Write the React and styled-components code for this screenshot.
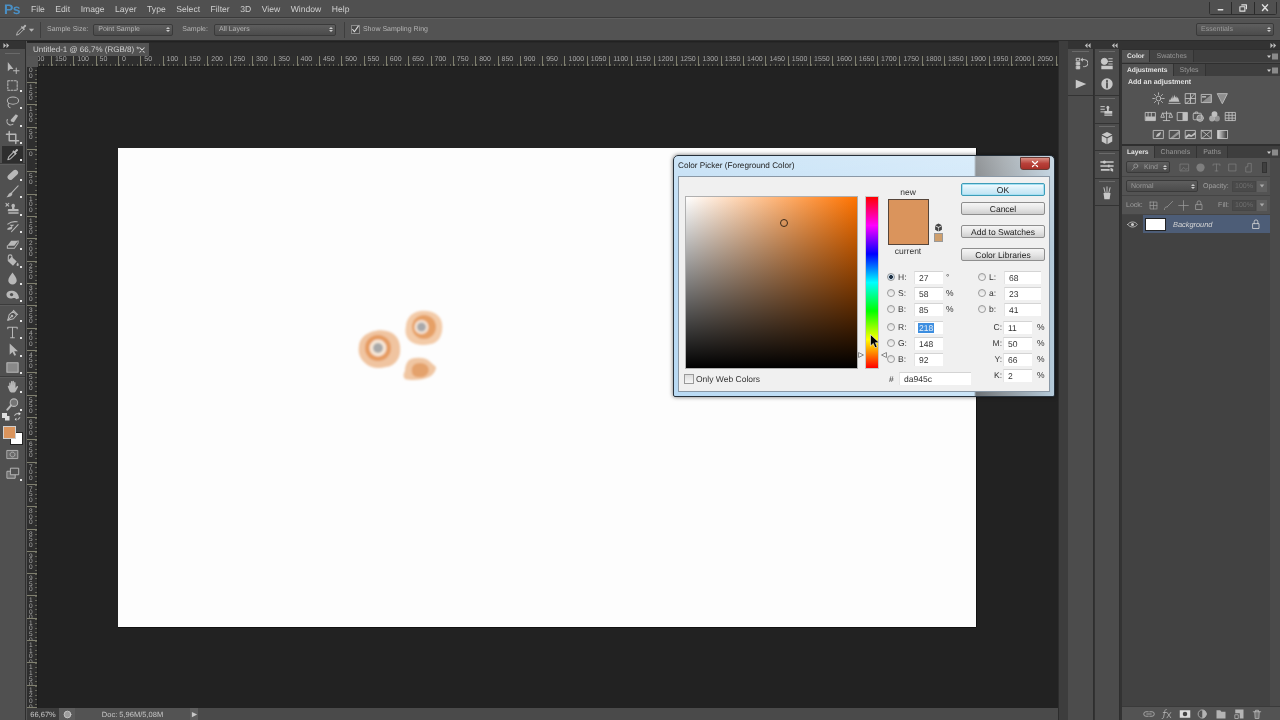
import React from 'react';
import styled, { createGlobalStyle } from 'styled-components';

const Global = createGlobalStyle`
  html, body { margin: 0; padding: 0; background: #535353; overflow: hidden; }
  * { box-sizing: border-box; }
`;

const UI = `"Liberation Sans", Arial, sans-serif`;
const TICK = 22.34;

const App_ = styled.div`
  position: relative; width: 1280px; height: 720px; overflow: hidden;
  display: flex; flex-direction: column; background: #535353;
  font-family: ${UI}; color: #c8c8c8; font-size: 8.5px; text-rendering: geometricPrecision;
  filter: blur(.3px);
`;
const MenuBar = styled.div`
  height: 18px; display: flex; align-items: center; padding-left: 4px; background: #505050;
  border-bottom: 1px solid #3a3a3a; flex: none;
`;
const Logo = styled.span`
  width: 27px; font: bold 14px ${UI}; color: #4a8fc4; letter-spacing: -0.5px;
`;
const MenuItem = styled.span`
  font-size: 8.6px; color: #cfcfcf; margin-right: 10.5px;
`;
const WinCtl = styled.div`
  margin: -1px 3px 0 auto; height: 13px; width: 68px; display: flex; background: #3f3f3f;
  border: 1px solid #2f2f2f; border-top: 0; border-radius: 0 0 3px 3px;
`;
const WinBtn = styled.span`
  flex: 1; display: flex; align-items: center; justify-content: center; color: #e0e0e0;
  border-left: 1px solid #2a2a2a; background: #505050;
  &:first-child { border-left: 0; }
`;
const OptionsBar = styled.div`
  height: 23px; flex: none; display: flex; align-items: center; background: #535353;
  border-top: 1px solid #5f5f5f; border-bottom: 1px solid #2c2c2c; padding-left: 14px; color: #b4b4b4;
`;
const Sep = styled.span`
  width: 1px; height: 16px; background: #3e3e3e; margin: ${p => p.$m}; flex: none;
`;
const Select = styled.div`
  width: ${p => p.$w}px; height: ${p => p.$h || 12}px; margin: ${p => p.$m || 0}; flex: none;
  display: flex; align-items: center; justify-content: space-between; padding: 0 2px 0 4px;
  background: linear-gradient(#5e5e5e, #4b4b4b); border: 1px solid #3a3a3a; border-radius: 2px;
  color: ${p => p.$dim ? '#9a9a9a' : '#b4b4b4'}; font-size: 7px;
`;
const Updown = styled.span`
  display: flex; flex-direction: column; gap: 1px;
  &::before, &::after { content: ''; border: 2px solid transparent; }
  &::before { border-bottom-color: #ccc; border-top-width: 0; }
  &::after { border-top-color: #ccc; border-bottom-width: 0; }
`;
const OptLabel = styled.span`
  font-size: 7px; margin: ${p => p.$m || 0}; flex: none; white-space: nowrap;
`;
const CheckBox = styled.span`
  width: 9px; height: 9px; background: #4a4a4a; border: 1px solid #8a8a8a; margin-left: 6px; flex: none;
  display: flex; align-items: center; justify-content: center; color: #ddd;
`;
const Main = styled.div`
  flex: 1; display: flex; min-height: 0;
`;
const ToolPanel = styled.div`
  width: 26px; flex: none; display: flex; flex-direction: column; background: #505050;
  border-right: 1px solid #2e2e2e; align-items: stretch;
`;
const DarkHead = styled.div`
  height: 8px; flex: none; background: #333; display: flex; align-items: center; color: #bbb; padding: 0 3px;
`;
const HeadCell = styled.div`
  width: ${p => p.$w ? `${p.$w}px` : 'auto'}; flex: ${p => p.$w ? 'none' : 1}; display: flex; justify-content: flex-end;
`;
const Grip = styled.div`
  height: 1px; margin: ${p => p.$m || '4px 5px 5px'}; background: #6a6a6a; flex: none;
`;
const ToolList = styled.div`
  display: flex; flex-direction: column; flex: none;
`;
const Tool = styled.div`
  position: relative; height: ${p => p.$h || 17.4}px; display: flex; align-items: center; justify-content: center;
  color: #b8b8b8; margin: 0 2px; flex: none;
  background: ${p => p.$on ? '#2e2e2e' : 'transparent'};
  ${p => p.$fly && `&::after { content: ''; position: absolute; right: 1px; bottom: 2px; width: 2px; height: 2px; background: #e4e4e4; }`}
`;
const ToolSep = styled.div`
  height: 2px; flex: none; border-top: 1px solid #3b3b3b; border-bottom: 1px solid #5c5c5c;
`;
const Mini = styled.div`
  height: 8px; display: flex; justify-content: space-between; align-items: center; padding: 0 3px 0 2px; flex: none; color: #ddd;
`;
const ColorWell = styled.div`
  position: relative; height: 20px; margin: 5px 0 0 3px; flex: none;
`;
const Bg = styled.span`
  position: absolute; left: 7px; top: 6px; width: 13px; height: 13px; background: #fff; border: 1px solid #222;
`;
const Fg = styled.span`
  position: absolute; left: 0; top: 0; width: 13px; height: 13px; background: #da945c; border: 1px solid #cfcfcf;
`;
const DocColumn = styled.div`
  width: 1031px; flex: none; margin-left: 1px; display: flex; flex-direction: column; background: #222;
`;
const TabBar = styled.div`
  height: 14px; flex: none; margin-top: 1px; display: flex; background: #2d2d2d; border-top: 1px solid #282828;
`;
const DocTab = styled.div`
  width: 122px; display: flex; align-items: center; justify-content: space-between; padding: 0 4px 0 6px;
  background: #535353; color: #d0d0d0; font-size: 8px; white-space: nowrap;
`;
const RulerRow = styled.div`
  height: 11px; flex: none; display: flex; background: #2e2e2e;
`;
const Corner = styled.div`
  width: 11px; flex: none; background: #555;
`;
const HTrack = styled.div`
  flex: 1; overflow: hidden; display: flex; border-bottom: 1px solid #1c1c1c;
`;
const HInner = styled.div`
  display: flex; margin-left: -9.4px; flex: none;
`;
const HCell = styled.span`
  width: ${TICK}px; height: 10px; flex: none; padding-left: 3px; border-left: 1px solid #80806f;
  font-size: 7px; line-height: 8px; color: #a8a8a8; white-space: nowrap;
  background: repeating-linear-gradient(to right, #66665a 0 1px, transparent 1px 4.468px) left bottom / 100% 2px no-repeat;
`;
const CanvasRow = styled.div`
  flex: 1; display: flex; min-height: 0;
`;
const VTrack = styled.div`
  width: 11px; flex: none; overflow: hidden; background: #2e2e2e; border-right: 1px solid #1c1c1c;
`;
const VInner = styled.div`
  display: flex; flex-direction: column; margin-top: -7.4px;
`;
const VCell = styled.div`
  height: ${TICK}px; flex: none; border-top: 1px solid #80806f; padding: 2px 0 0 2px; overflow: hidden;
  background: repeating-linear-gradient(to bottom, #66665a 0 1px, transparent 1px 4.468px) right top / 2px 100% no-repeat;
`;
const VText = styled.div`
  width: 5px; word-break: break-all; font-size: 6.5px; line-height: 5.6px; color: #a8a8a8;
`;
const Canvas = styled.div`
  flex: 1; min-width: 0; padding: 81px 0 0 80px; background: #222;
`;
const Doc = styled.div`
  width: 858px; height: 479px; background: #fdfdfd; box-shadow: 0 1px 0 #111, 1px 0 0 #111;
`;
const DocArt = styled.svg`
  display: block; width: 100%; height: 100%;
`;
const StatusBar = styled.div`
  height: 12px; flex: none; display: flex; align-items: center; background: #4a4a4a; color: #c8c8c8; font-size: 7.5px;
`;
const StatusCell = styled.div`
  height: 100%; width: ${p => p.$w}px; flex: none; display: flex; align-items: center; justify-content: center;
  background: ${p => p.$bg}; white-space: nowrap;
`;
const DockGutter = styled.div`
  width: 10px; flex: none; background: #3d3d3d; border-left: 1px solid #2c2c2c;
`;
const DockArea = styled.div`
  flex: 1; display: flex; flex-direction: column; min-width: 0;
`;
const DockRow = styled.div`
  flex: 1; display: flex; min-height: 0; background: #333; gap: 1px;
`;
const DockCol = styled.div`
  width: ${p => p.$w}px; flex: none; display: flex; flex-direction: column; background: #4c4c4c; border-right: 1px solid #2e2e2e;
`;
const DockGroup = styled.div`
  display: flex; flex-direction: column; align-items: stretch; flex: none; border-bottom: 1px solid #333; padding-bottom: ${p => p.$pb || 0}px;
`;
const DockIcon = styled.div`
  height: ${p => p.$h || 19}px; display: flex; align-items: center; justify-content: center; color: #c8c8c8;
`;
const Panels = styled.div`
  flex: 1; display: flex; flex-direction: column; min-width: 0; background: #4a4a4a; margin-left: 1px;
`;
const TabStrip = styled.div`
  height: 13px; flex: none; display: flex; align-items: stretch; background: #3e3e3e; border-top: 1px solid #2f2f2f; margin-top: ${p => p.$mt || 0}px;
`;
const PanelTab = styled.div`
  padding: 0 ${p => p.$pad || 5}px; display: flex; align-items: center; font-size: ${p => p.$on ? 6.7 : 7}px;
  background: ${p => p.$on ? '#535353' : '#444'}; color: ${p => p.$on ? '#e6e6e6' : '#989898'};
  font-weight: ${p => p.$on ? 'bold' : 'normal'}; border-right: 1px solid #333;
`;
const PanelMenu = styled.div`
  margin-left: auto; padding-right: 2px; display: flex; align-items: center; color: #cfcfcf;
`;
const AdjustBody = styled.div`
  height: 69px; flex: none; background: #535353; padding-top: 3px; border-bottom: 1px solid #2f2f2f;
`;
const AdjustTitle = styled.div`
  font-weight: bold; color: #e2e2e2; font-size: 7px; padding-left: 6px; height: 10px;
`;
const AdjustRow = styled.div`
  height: 18px; display: flex; justify-content: center; align-items: center; gap: 2px; padding-right: 22px; color: #c0c0c0;
`;
const IconCell = styled.span`
  width: 14px; height: 14px; display: flex; align-items: center; justify-content: center;
`;
const LayersBody = styled.div`
  flex: 1; display: flex; flex-direction: column; min-height: 0;
`;
const LayerControls = styled.div`
  background: #535353; flex: none; margin-right: 10px;
`;
const CtlRow = styled.div`
  height: 19px; display: flex; align-items: center; padding: 0 3px 0 4px; border-bottom: 1px solid #454545; color: #a0a0a0;
`;
const FilterIcons = styled.div`
  display: flex; gap: 2.200px; margin-left: 7px; color: #7e7e7e;
`;
const Toggle = styled.span`
  width: 6px; height: 11px; background: #3f3f3f; border: 1px solid #333; margin-left: 6px;
`;
const PctBox = styled.span`
  width: 24px; height: 11px; background: #4a4a4a; border: 1px solid #464646; color: #6e6e6e; font-size: 7px;
  display: flex; align-items: center; justify-content: center; flex: none;
`;
const PctArrow = styled.span`
  width: 10px; height: 11px; background: #606060; margin-left: 1px; flex: none; display: flex; align-items: center; justify-content: center; color: #aaa;
`;
const LockIcons = styled.div`
  display: flex; gap: 1px; margin: 0 auto 0 4px; color: #9a9a9a;
`;
const LayerList = styled.div`
  flex: 1; background: #424242; margin-right: 10px; min-height: 0;
`;
const LayerRow = styled.div`
  height: 18px; display: flex; align-items: center;
`;
const EyeCell = styled.div`
  width: 21px; height: 100%; flex: none; display: flex; align-items: center; justify-content: center; color: #ccc;
`;
const LayerMain = styled.div`
  flex: 1; height: 100%; display: flex; align-items: center; background: #4d5d77; padding: 0 8px 0 2px; color: #d6d6d6;
`;
const Thumb = styled.span`
  width: 21px; height: 13px; background: #fff; border: 1px solid #222; flex: none; margin-right: 7px;
`;
const LayerName = styled.span`
  font-style: italic; font-size: 7.4px; flex: 1;
`;
const PanelFooter = styled.div`
  height: 14px; flex: none; background: #535353; display: flex; align-items: center; padding-left: 20px; gap: 4px; color: #b4b4b4; border-top: 1px solid #3a3a3a;
`;

/* Colour picker dialog, floating over the workspace */
const Dialog = styled.div`
  position: absolute; left: 673px; top: 155px; width: 382px; height: 242px; display: flex; flex-direction: column;
  padding: 0 4px 4px 4px; border: 1px solid #26303a; border-radius: 5px 5px 2px 2px;
  background:
    linear-gradient(rgba(255,255,255,.28), rgba(255,255,255,0) 40%),
    linear-gradient(to right, #b9daf4 0, #cbe5f8 300px, #6d7276 302px, #8d959b 330px, #b5cbdb 100%);
  box-shadow: 0 0 4px rgba(0,0,0,.55);
  color: #222;
`;
const TitleBar = styled.div`
  height: 20px; flex: none; display: flex; align-items: flex-start; justify-content: space-between; color: #222;
`;
const TitleText = styled.span`
  margin: 5px 0 0 0; font-size: 8.2px;
`;
const CloseBtn = styled.span`
  width: 30px; height: 13px; margin-top: 1px; border-radius: 0 0 3px 3px; border: 1px solid #6a3a34;
  background: linear-gradient(#d98e82, #b9413a 50%, #a83029); color: #fff; display: flex; align-items: center; justify-content: center;
`;
const Client = styled.div`
  flex: 1; display: flex; background: #f0f0f0; border: 1px solid #8a98a6; padding-left: 7px; min-height: 0;
`;
const PickerCol = styled.div`
  width: 171px; flex: none; padding-top: 20px; display: flex; flex-direction: column;
`;
const SvSquare = styled.div`
  position: relative; width: 171px; height: 171px; flex: none;
  background: linear-gradient(to top, #000, rgba(0,0,0,0)), linear-gradient(to right, #fff, #ff7300);
  box-shadow: 0 0 0 1px #b0b0b0;
`;
const SvMark = styled.span`
  position: absolute; left: 94px; top: 22px; width: 8px; height: 8px; border-radius: 50%; border: 1px solid #3a2a1a;
`;
const WebRow = styled.div`
  display: flex; align-items: center; margin: 6px 0 0 -2px; gap: 2px; color: #333; font-size: 8.5px;
`;
const WebBox = styled.span`
  width: 10px; height: 10px; background: linear-gradient(#ddd, #f6f6f6); border: 1px solid #9a9a9a;
`;
const HueStrip = styled.div`
  position: relative; width: 12px; height: 171px; flex: none; margin: 20px 8px 0 9px;
  background: linear-gradient(#f00, #f0f 16.67%, #00f 33.33%, #0ff 50%, #0f0 66.67%, #ff0 83.33%, #f00);
  box-shadow: 0 0 0 1px #c8c8c8;
`;
const HueArrow = styled.span`
  position: absolute; top: 155px; ${p => p.$side}: -8px; width: 5px; height: 6px; color: #8a8a8a; display: flex;
`;
const Pointer = styled.svg`
  position: absolute; left: 4px; top: 137px; width: 10px; height: 15px;
`;
const RightSide = styled.div`
  flex: 1; display: flex; flex-direction: column; min-width: 0; color: #333;
`;
const RightTop = styled.div`
  height: 92px; flex: none; display: flex;
`;
const SwatchCol = styled.div`
  width: 75px; flex: none; position: relative; padding: 9px 0 0 2px;
`;
const SwatchLabel = styled.div`
  width: 40px; text-align: center; font-size: 8.5px; height: 13px; line-height: 12px;
`;
const Swatch = styled.div`
  width: 41px; height: 46px; background: #da945c; border: 1px solid #56453a;
`;
const CubeStack = styled.div`
  position: absolute; left: 48px; top: 46px; display: flex; flex-direction: column; align-items: center; gap: 1px; color: #444;
`;
const MiniSwatch = styled.span`
  width: 9px; height: 9px; background: #cf9f6c; border: 1px solid #999;
`;
const ButtonCol = styled.div`
  width: 84px; flex: none; display: flex; flex-direction: column; padding-top: 6px;
`;
const Btn = styled.div`
  height: 13px; flex: none; margin-bottom: ${p => p.$mb}px; display: flex; align-items: center; justify-content: center;
  font-size: 8.5px; color: #222; border-radius: 2px; border: 1px solid ${p => p.$primary ? '#3d9cb8' : '#8e8e8e'};
  background: ${p => p.$primary
    ? 'linear-gradient(#f4fbff, #d4edf8 50%, #bfe3f3)'
    : 'linear-gradient(#f5f5f5, #e6e6e6 50%, #cfcfcf)'};
  ${p => p.$primary && 'box-shadow: inset 0 0 0 1px #a6e0f2;'}
`;
const Fields = styled.div`
  display: flex; flex: 1;
`;
const FieldCol = styled.div`
  width: ${p => p.$w}px; flex: none; display: flex; flex-direction: column;
`;
const FieldRow = styled.div`
  height: 16px; flex: none; display: flex; align-items: center; margin-bottom: ${p => p.$mb || 0}px; font-size: 8.5px;
`;
const Radio = styled.span`
  width: 8px; height: 8px; border-radius: 50%; flex: none; border: 1px solid #9a9a9a; margin-left: ${p => p.$ml || 0}px;
  background: ${p => p.$on ? 'radial-gradient(circle, #234 0 1.700px, #cfe0ee 2.200px)' : 'linear-gradient(#ddd, #f8f8f8)'};
`;
const FLabel = styled.span`
  width: ${p => p.$w}px; flex: none; padding-left: ${p => p.$pl || 0}px; text-align: ${p => p.$right ? 'right' : 'left'};
`;
const Input = styled.span`
  width: ${p => p.$w}px; height: 13px; flex: none; background: #fff; border-top: 1px solid #d4d4d4; border-left: 1px solid #e4e4e4;
  padding-left: 4px; display: flex; align-items: center; font-size: 8.5px; color: #333;
`;
const Selected = styled.span`
  background: #3d8ee0; color: #e8f0f8; padding: 0 1px; margin-left: -1px;
`;
const Unit = styled.span`
  margin-left: ${p => p.$ml || 3}px; font-size: 8.5px;
`;
const HexRow = styled.div`
  height: 15px; display: flex; align-items: center; margin-top: 4px; margin-left: 3px; font-size: 8.5px;
`;

/* Icons */
const Svg = styled.svg`
  display: block; flex: none; width: ${p => p.$s || 14}px; height: ${p => p.$s || 14}px;
`;
const Ic = ({ s, children, vb = 16, w = 1.1 }) => (
  <Svg $s={s} viewBox={`0 0 ${vb} ${vb}`} fill="none" stroke="currentColor" strokeWidth={w} strokeLinecap="round" strokeLinejoin="round">{children}</Svg>
);
const F = { fill: 'currentColor', stroke: 'none' };

const eyedropper = <><path d="M3 13.5l1-3 5.5-5.5 2 2L6 12.5z" /><path {...F} d="M9 3.5l1.2 1 1.800-2.200c1-.8 2.500.6 1.700 1.700l-2.200 1.800 1 1.200-1.200 1.200-3.500-3.500z" /></>;
const hand = <path {...F} d="M4.500 8V4.500c0-1 1.300-1 1.400 0L6.300 7V2.800c0-1 1.400-1 1.500 0L8 7V2.500c0-1 1.400-1 1.500 0V7.300l.3-3.500c.1-1 1.400-.8 1.400.2V9.500l1.300-1.700c.7-.8 1.800 0 1.300.9L11.500 13c-.6 1-1.300 1.500-2.500 1.500H7.500c-1.500 0-2.300-.8-2.800-2L3 8.300c-.3-1 .9-1.500 1.500-.3z" />;

const tools = [
  [
    { k: 'move', i: <><path {...F} d="M3 2v10l2.500-2.300L9 9.500z" /><path d="M12 8.500v6M9 11.500h6" /></> },
    { k: 'marquee', fly: 1, i: <rect x="3" y="3" width="10" height="10" strokeDasharray="2 1.500" /> },
    { k: 'lasso', fly: 1, i: <><ellipse cx="8.500" cy="6" rx="6" ry="3.800" /><path d="M4 9c-1.500 1.500-.5 4 1.500 4.500" /></> },
    { k: 'quick', fly: 1, i: <><path d="M2.500 8a4 4 0 0 0 6 5" strokeDasharray="2 1" /><path {...F} d="M6 8.500l5.500-6 2.500 1.500-4.500 7-3-1z" /></> },
    { k: 'crop', fly: 1, w: 1.5, i: <path d="M4.500 1.500v10h10M1.500 4.500h10v10" /> },
    { k: 'eye', fly: 1, on: 1, i: eyedropper },
  ],
  [
    { k: 'heal', fly: 1, i: <rect x="1.500" y="5.500" width="13" height="6" rx="3" transform="rotate(-42 8 8)" {...F} /> },
    { k: 'brush', fly: 1, i: <><path d="M14 2L6.500 10" /><path {...F} d="M6.500 9l1.500 1.500c-.5 2.500-3 3.800-6.500 3.500 1.800-.8 1.500-3.800 5-5z" /></> },
    { k: 'stamp', fly: 1, i: <><path {...F} d="M8.500 3a2 2 0 0 1 1.500 3.500V8.500h3.500c.8 0 1 .5 1 1V11H3V9.500c0-.6.400-1 1-1h3.500V6.500A2 2 0 0 1 8.500 3zM3.500 12h11v1.500h-11z" /><path d="M1 2.500l3 3M4 2.500l-3 3" /></> },
    { k: 'hist', fly: 1, i: <><path d="M3 5.500c3-2.500 7-3 10-2.500M7 13.500L14 6" /><path {...F} d="M2 11c2-2 4-3 6-2l-1 2c-1.500.5-3 1-5 0z" /><path {...F} d="M5 6h5l-3 2.500z" /></> },
    { k: 'eraser', fly: 1, i: <><path {...F} d="M6.500 5h7.500l-4 5.500H2.500z" /><path d="M2.500 10.500v2.500h7.500l4-5.500V5" /></> },
    { k: 'fill', fly: 1, i: <><path {...F} d="M7 4l5.500 5-4 4.500-5.500-5zM13.500 10c.8 1 1.200 2 1.200 2.700a1.200 1.200 0 0 1-2.400 0c0-.7.500-1.700 1.200-2.700z" /><path d="M3.500 8V4a2 2 0 0 1 4 0v2" /></> },
    { k: 'drop', fly: 1, i: <path {...F} d="M8 1.500c2 3 4.500 5.500 4.500 8.500a4.500 4.500 0 0 1-9 0c0-3 2.500-5.500 4.500-8.500z" /> },
    { k: 'smudge', fly: 1, i: <><path {...F} d="M1.500 7c0-3 3-4.500 6.500-4 4 .5 6.500 3.500 7 8l-3 1c-1-1.500-2-1.500-4-1-3 .8-6.500-.5-6.500-4z" /><circle cx="7" cy="7" r="1.800" fill="#505050" stroke="none" /></> },
  ],
  [
    { k: 'pen', fly: 1, i: <><path d="M3 13l1.500-6 4-3.500 4 4-3.500 4z" /><path d="M3 13l3.500-3.500M9 2.500l4.500 4.500" /><circle cx="7.500" cy="8.500" r=".8" /></> },
    { k: 'type', fly: 1, i: <path d="M3 4V2.500h10V4M8 2.500v11M6 13.500h4" /> },
    { k: 'path', fly: 1, i: <path {...F} d="M5 1.500v12l3-2.800 2 4 1.800-.8-2-4h4z" /> },
    { k: 'shape', fly: 1, i: <rect x="2" y="3" width="12" height="10" fill="currentColor" fillOpacity=".55" /> },
  ],
  [
    { k: 'hand', fly: 1, i: hand },
    { k: 'zoom', fly: 1, i: <><circle cx="9.500" cy="6" r="4" fill="currentColor" fillOpacity=".35" /><path strokeWidth="2.200" d="M6.500 9l-4 4.500" /></> },
  ],
];

const db = (
  <Ic s={7} vb={8}><path {...F} d="M4 1v6L1 4zM7.500 1v6l-3-3z" /></Ic>
);
const df = (
  <Ic s={7} vb={8}><path {...F} d="M4 1v6l3-3zM.5 1v6l3-3z" /></Ic>
);
const menuIc = (
  <Svg $s={11} viewBox="0 0 11 8" fill="currentColor"><path d="M0 3h4L2 5.500z" /><rect x="5" y="1" width="6" height="6" fill="#8a8a8a" /></Svg>
);

const adj = {
  sun: <Ic s={13}><circle cx="8" cy="8" r="3" /><path d="M8 1v2M8 13v2M1 8h2M13 8h2M3 3l1.500 1.500M13 3l-1.500 1.500M3 13l1.500-1.500M13 13l-1.500-1.500" /></Ic>,
  levels: <Ic s={13}><path {...F} d="M1 12l1-3 1 1 1-4 1 3 1-5 1 4 1-5 1 4 1-2 1 3 1-2 1 3 1 3z" /><path d="M1 14h14" /></Ic>,
  curves: <Ic s={13}><rect x="2" y="2" width="12" height="12" /><path d="M2 14C7 13 9 4 14 2M2 8h12M8 2v12" /></Ic>,
  expo: <Ic s={13}><rect x="2" y="3" width="12" height="10" /><path {...F} d="M2 13L14 3v10z" opacity=".55" /><path stroke="#fff" d="M3 6h4" /></Ic>,
  vibrance: <Ic s={13}><path {...F} d="M2 2h12L8 14z" opacity=".55" /><path d="M2 2h12L8 14z" /></Ic>,
  hue: <Ic s={13}><rect x="2" y="3" width="12" height="10" /><path {...F} d="M2 8h12v5H2z" /><path d="M5 3v5M9 3v5" /></Ic>,
  balance: <Ic s={13}><path d="M8 2v11M4 13h8M3 4h10M3 4L1 9h4zM13 4l-2 5h4z" /></Ic>,
  bw: <Ic s={13}><rect x="2" y="3" width="12" height="10" /><path {...F} d="M8 3h6v10H8z" /></Ic>,
  photo: <Ic s={13}><rect x="1.500" y="4" width="10" height="8" rx="1" /><circle cx="10" cy="10" r="4" fill="currentColor" fillOpacity=".5" /><path d="M4 4V2.500h3V4" /></Ic>,
  mixer: <Svg $s={13} viewBox="0 0 16 16" fill="currentColor"><circle cx="8" cy="5" r="3.600" /><circle cx="5" cy="10.500" r="3.600" opacity=".8" /><circle cx="11" cy="10.500" r="3.600" opacity=".6" /></Svg>,
  lookup: <Ic s={13}><rect x="2" y="3" width="12" height="10" /><path d="M6 3v10M10 3v10M2 6.500h12M2 10h12" /></Ic>,
  invert: <Ic s={13}><rect x="2" y="3" width="12" height="10" /><path {...F} d="M5 11c0-3 3-5 6-6 0 3-2 6-6 6z" /></Ic>,
  post: <Ic s={13}><rect x="2" y="3" width="12" height="10" /><path {...F} opacity=".6" d="M2 13L14 3v4L6 13z" /></Ic>,
  thresh: <Ic s={13}><rect x="2" y="3" width="12" height="10" /><path {...F} d="M2 10l4-3 3 2 5-4v3l-5 3-3-1-4 3z" /></Ic>,
  selcol: <Ic s={13}><rect x="2" y="3" width="12" height="10" /><path d="M2 3l12 10M14 3L2 13" /></Ic>,
  grad: <Svg $s={13} viewBox="0 0 16 16"><defs><linearGradient id="adjg"><stop offset="0" stopColor="#ddd" /><stop offset="1" stopColor="#333" /></linearGradient></defs><rect x="2" y="3" width="12" height="10" fill="url(#adjg)" stroke="#ccc" /></Svg>,
};
const adjRows = [
  ['sun', 'levels', 'curves', 'expo', 'vibrance'],
  ['hue', 'balance', 'bw', 'photo', 'mixer', 'lookup'],
  ['invert', 'post', 'thresh', 'selcol', 'grad'],
];

const lockIc = <Ic s={12}><rect x="4" y="7.500" width="8" height="6.500" /><path d="M5.500 7.500V5a2.500 2.500 0 0 1 5 0v2.500" /></Ic>;

const hLabels = [];
for (let v = -200; v <= 2100; v += 50) hLabels.push(Math.abs(v));
const vLabels = [];
for (let v = -200; v <= 1250; v += 50) vLabels.push(Math.abs(v));

const hsb = [['H:', '27', '°', 1], ['S:', '58', '%'], ['B:', '85', '%']];
const rgb = [['R:', '218'], ['G:', '148'], ['B:', '92']];
const lab = [['L:', '68'], ['a:', '23'], ['b:', '41']];
const cmyk = [['C:', '11'], ['M:', '50'], ['Y:', '66'], ['K:', '2']];

export default function App() {
  return (
    <App_>
      <Global />
      <MenuBar>
        <Logo>Ps</Logo>
        {['File', 'Edit', 'Image', 'Layer', 'Type', 'Select', 'Filter', '3D', 'View', 'Window', 'Help'].map(m => <MenuItem key={m}>{m}</MenuItem>)}
        <WinCtl>
          <WinBtn><Ic s={9}><path strokeWidth="2.500" d="M4 12h8" /></Ic></WinBtn>
          <WinBtn><Ic s={10}><rect x="3" y="6" width="8" height="7" strokeWidth="1.800" /><path strokeWidth="1.800" d="M6 3h7.500v6" /></Ic></WinBtn>
          <WinBtn><Ic s={10} w={2.400}><path d="M4 3l8 9M12 3l-8 9" /></Ic></WinBtn>
        </WinCtl>
      </MenuBar>
      <OptionsBar>
        <Ic s={14}>{eyedropper}</Ic>
        <Ic s={7} vb={8}><path {...F} d="M1 3h6L4 6.500z" /></Ic>
        <Sep $m="0 6px 0 5px" />
        <OptLabel>Sample Size:</OptLabel>
        <Select $w={80} $m="0 0 0 5px">Point Sample<Updown /></Select>
        <OptLabel $m="0 0 0 9px">Sample:</OptLabel>
        <Select $w={122} $m="0 0 0 6px">All Layers<Updown /></Select>
        <Sep $m="0 0 0 8px" />
        <CheckBox><Ic s={9} w={2}><path d="M3 8l3 4 7-10" /></Ic></CheckBox>
        <OptLabel $m="0 0 0 3px">Show Sampling Ring</OptLabel>
        <Select $w={78} $h={13} $dim $m="0 6px 0 auto">Essentials<Updown /></Select>
      </OptionsBar>
      <Main>
        <ToolPanel>
          <DarkHead>{df}</DarkHead>
          <Grip />
          {tools.map((group, g) => (
            <React.Fragment key={g}>
              <ToolList>
                {group.map(t => (
                  <Tool key={t.k} $fly={t.fly} $on={t.on}>
                    <Ic s={15} w={t.w || 1.1}>{t.i}</Ic>
                  </Tool>
                ))}
              </ToolList>
              {g < tools.length - 1 && <ToolSep />}
            </React.Fragment>
          ))}
          <Mini>
            <Ic s={8} vb={8}><rect {...F} x="0" y="0" width="5" height="5" /><rect x="3" y="3" width="4.500" height="4.500" fill="#ddd" stroke="none" /></Ic>
            <Ic s={9} w={1.600}><path d="M3 6a4 4 0 0 1 4-3h3M12 10a4 4 0 0 1-3 3" /><path {...F} d="M10 0l4 3-4 3zM6 16l-3-3 3-3z" /></Ic>
          </Mini>
          <ColorWell><Bg /><Fg /></ColorWell>
          <Tool $h={18}><Ic s={13}><rect x="1.500" y="3" width="13" height="10" fill="currentColor" fillOpacity=".25" /><circle cx="8" cy="8" r="3" strokeDasharray="1.500 1" /></Ic></Tool>
          <Tool $h={19} $fly><Ic s={14}><rect x="1.500" y="6" width="9" height="8" fill="currentColor" fillOpacity=".3" /><rect x="5.500" y="2.500" width="9" height="7.500" fill="#505050" /></Ic></Tool>
        </ToolPanel>
        <DocColumn>
          <TabBar>
            <DocTab>
              <span>Untitled-1 @ 66,7% (RGB/8) *</span>
              <Ic s={6} vb={8} w={1.400}><path d="M1 1l6 6M7 1L1 7" /></Ic>
            </DocTab>
          </TabBar>
          <RulerRow>
            <Corner />
            <HTrack>
              <HInner>{hLabels.map((l, i) => <HCell key={i}>{l}</HCell>)}</HInner>
            </HTrack>
          </RulerRow>
          <CanvasRow>
            <VTrack>
              <VInner>{vLabels.map((l, i) => <VCell key={i}><VText>{l}</VText></VCell>)}</VInner>
            </VTrack>
            <Canvas>
              <Doc>
                <DocArt viewBox="0 0 858 479">
                  <defs><filter id="soft"><feGaussianBlur stdDeviation=".8" /></filter></defs>
                  <g filter="url(#soft)">
                    <path fill="#f0c4a0" d="M246 188c7-6 19-8 28-3 7 4 9 12 8 20-1 7-6 13-14 14-8 2-16 1-21-4-6-5-7-12-6-17 0-4 2-7 5-10z" />
                    <circle cx="260" cy="200" r="13" fill="#e69c62" />
                    <circle cx="260" cy="200" r="8.500" fill="#f8e8d8" />
                    <circle cx="260" cy="200" r="5" fill="#a9a9a9" />
                    <path fill="#f3cba8" d="M293 167c6-5 17-6 25-1 6 4 7 11 6 17-1 7-5 12-11 13-8 2-16 1-21-3-5-5-5-10-4-15 0-4 2-8 5-11z" />
                    <circle cx="306" cy="179" r="12" fill="#e6a066" />
                    <circle cx="303.500" cy="179" r="7" fill="#f6e6d8" />
                    <circle cx="303.500" cy="179" r="4.500" fill="#a8a8aa" />
                    <path fill="#f0c6a2" d="M291 212c5-3 14-3 19 0l8 7c0 4-3 8-7 10-6 3-17 4-24 2-2-2-2-5 0-8 0-4 1-8 4-11z" />
                    <path fill="#e4a26c" d="M297 216c5-2 11-1 13 3 2 4 0 8-5 10-5 1-10 0-11-4-1-4 0-7 3-9z" />
                  </g>
                </DocArt>
              </Doc>
            </Canvas>
          </CanvasRow>
          <StatusBar>
            <StatusCell $w={32} $bg="#3c3c3c">66,67%</StatusCell>
            <StatusCell $w={16} $bg="#5c5c5c"><Ic s={9} w={1.600}><circle cx="8" cy="8" r="6" fill="currentColor" fillOpacity=".6" /></Ic></StatusCell>
            <StatusCell $w={115} $bg="#535353">Doc: 5,96M/5,08M</StatusCell>
            <StatusCell $w={8} $bg="#5e5e5e"><Ic s={7} vb={8}><path {...F} d="M1 1l6 3-6 3z" /></Ic></StatusCell>
          </StatusBar>
        </DocColumn>
        <DockGutter />
        <DockArea>
          <DarkHead>
            <HeadCell $w={20}>{db}</HeadCell>
            <HeadCell $w={27}>{db}</HeadCell>
            <HeadCell>{df}</HeadCell>
          </DarkHead>
          <DockRow>
            <DockCol $w={26}>
              <DockGroup $pb={1}>
                <Grip $m="2px 4px 2px" />
                <DockIcon $h={20}><Ic s={14}><rect x="3" y="1.500" width="3.500" height="3" /><rect x="3" y="6" width="3.500" height="3" fill="currentColor" /><rect x="3" y="10.500" width="3.500" height="3" fill="currentColor" /><path d="M10 3h2a2.500 2.500 0 0 1 0 8h-1" /><path {...F} d="M10 .5v5L7.500 3z" /></Ic></DockIcon>
                <DockIcon $h={20}><Ic s={14}><path {...F} d="M2 3l12 5-12 5z" /></Ic></DockIcon>
              </DockGroup>
            </DockCol>
            <DockCol $w={25}>
              <DockGroup $pb={1}>
                <Grip $m="2px 4px 2px" />
                <DockIcon $h={20}><Ic s={14}><circle cx="5" cy="5" r="3.500" fill="currentColor" /><path d="M10 2h4M10 5h4M10 8h4" /><rect {...F} x="1.500" y="10" width="13" height="4" /></Ic></DockIcon>
                <DockIcon $h={20}><Ic s={14}><circle {...F} cx="8" cy="8" r="6.500" /><path stroke="#4c4c4c" strokeWidth="2" d="M8 7v5M8 4v1" /></Ic></DockIcon>
              </DockGroup>
              <DockGroup $pb={2.5}>
                <Grip $m="2px 4px 2px" />
                <DockIcon><Ic s={14}><path d="M1 3h4M1 6h4M1 9h4" /><path {...F} d="M9 2a2 2 0 0 1 1 3.500V8h4v3H5V8h3V5.500A2 2 0 0 1 9 2zM5 12h9v1.500H5z" /></Ic></DockIcon>
              </DockGroup>
              <DockGroup $pb={2.5}>
                <Grip $m="2px 4px 2px" />
                <DockIcon><Ic s={14}><path {...F} d="M8 1l6 3-6 3-6-3zM2 5.500l5.500 2.800V15L2 12zM14 5.500L8.500 8.300V15l5.500-3z" /></Ic></DockIcon>
              </DockGroup>
              <DockGroup $pb={2.5}>
                <Grip $m="2px 4px 2px" />
                <DockIcon><Ic s={14} w={1.600}><path d="M1 3.500h14M1 8h14" /><circle {...F} cx="5" cy="3.500" r="1.800" /><rect {...F} x="9" y="6.500" width="2" height="3" /><path {...F} d="M1 11.500h10v2H1zM12 10l3 1.500v3l-3-1z" /></Ic></DockIcon>
              </DockGroup>
              <DockGroup $pb={2.5}>
                <Grip $m="2px 4px 2px" />
                <DockIcon><Ic s={14}><path {...F} d="M4 8h8l-1 7H5z" /><path d="M6 8L4.500 2M8 8V1M10 8l1.500-6" /></Ic></DockIcon>
              </DockGroup>
            </DockCol>
            <Panels>
              <TabStrip>
                <PanelTab $on>Color</PanelTab>
                <PanelTab $pad={6}>Swatches</PanelTab>
                <PanelMenu>{menuIc}</PanelMenu>
              </TabStrip>
              <TabStrip $mt={1}>
                <PanelTab $on>Adjustments</PanelTab>
                <PanelTab $pad={6}>Styles</PanelTab>
                <PanelMenu>{menuIc}</PanelMenu>
              </TabStrip>
              <AdjustBody>
                <AdjustTitle>Add an adjustment</AdjustTitle>
                {adjRows.map((r, i) => (
                  <AdjustRow key={i}>
                    {r.map(k => <IconCell key={k}>{adj[k]}</IconCell>)}
                  </AdjustRow>
                ))}
              </AdjustBody>
              <TabStrip>
                <PanelTab $on>Layers</PanelTab>
                <PanelTab $pad={6}>Channels</PanelTab>
                <PanelTab $pad={6}>Paths</PanelTab>
                <PanelMenu>{menuIc}</PanelMenu>
              </TabStrip>
              <LayersBody>
                <LayerControls>
                  <CtlRow>
                    <Select $w={44} $dim><Ic s={8} w={1.600}><circle cx="9.500" cy="6" r="4" /><path d="M6.500 9L2 14" /></Ic>Kind<Updown /></Select>
                    <FilterIcons>
                      <IconCell><Ic s={11}><rect x="2" y="3" width="12" height="10" /><path d="M3 12l4-4 3 3 2-2" /></Ic></IconCell>
                      <IconCell><Ic s={11}><circle {...F} cx="8" cy="8" r="6" /></Ic></IconCell>
                      <IconCell><Ic s={11}><path d="M3 5V3h10v2M8 3v10M6 13h4" /></Ic></IconCell>
                      <IconCell><Ic s={11}><rect x="3" y="3" width="10" height="10" /></Ic></IconCell>
                      <IconCell><Ic s={11}><path d="M4 14V7h3V2h5v12z" /></Ic></IconCell>
                    </FilterIcons>
                    <Toggle />
                  </CtlRow>
                  <CtlRow>
                    <Select $w={72} $dim>Normal<Updown /></Select>
                    <OptLabel $m="0 auto 0 5px">Opacity:</OptLabel>
                    <PctBox>100%</PctBox>
                    <PctArrow><Ic s={6} vb={8}><path {...F} d="M1 2h6L4 6z" /></Ic></PctArrow>
                  </CtlRow>
                  <CtlRow>
                    <OptLabel>Lock:</OptLabel>
                    <LockIcons>
                      <IconCell><Ic s={11}><rect x="3" y="3" width="10" height="10" strokeDasharray="2 1" /><path d="M3 8h10M8 3v10" /></Ic></IconCell>
                      <IconCell><Ic s={11}><path d="M14 2L6 10M2 14c0-3 2-4.500 4-4" /></Ic></IconCell>
                      <IconCell><Ic s={11}><path d="M8 1v14M1 8h14" /></Ic></IconCell>
                      <IconCell>{lockIc}</IconCell>
                    </LockIcons>
                    <OptLabel $m="0 3px 0 0">Fill:</OptLabel>
                    <PctBox>100%</PctBox>
                    <PctArrow><Ic s={6} vb={8}><path {...F} d="M1 2h6L4 6z" /></Ic></PctArrow>
                  </CtlRow>
                </LayerControls>
                <LayerList>
                  <LayerRow>
                    <EyeCell><Ic s={11}><path d="M1 8c3-5 11-5 14 0-3 5-11 5-14 0z" /><circle {...F} cx="8" cy="8" r="2.200" /></Ic></EyeCell>
                    <LayerMain>
                      <Thumb />
                      <LayerName>Background</LayerName>
                      {lockIc}
                    </LayerMain>
                  </LayerRow>
                </LayerList>
                <PanelFooter>
                  <IconCell><Ic s={12}><path d="M7 5H4a3 3 0 0 0 0 6h3M9 5h3a3 3 0 0 1 0 6H9M5 8h6" /></Ic></IconCell>
                  <IconCell><Ic s={12}><path d="M7 2C5 2 5 4 4.500 7l-1 5c-.3 2-1 2-2 2M3 6h4M8 6l5 7M13 6l-5 7" /></Ic></IconCell>
                  <IconCell><Svg $s={12} viewBox="0 0 16 16"><rect x="1" y="3" width="14" height="10" fill="#ddd" /><circle cx="8" cy="8" r="3" fill="#444" /></Svg></IconCell>
                  <IconCell><Ic s={12}><circle cx="7" cy="8" r="5.500" /><path {...F} d="M7 2.500a5.500 5.500 0 0 1 0 11z" /></Ic></IconCell>
                  <IconCell><Ic s={12}><path {...F} d="M2 3h5l1.500 2H14v9H2z" /></Ic></IconCell>
                  <IconCell><Ic s={12}><path {...F} d="M3 2h11v12H9V7H3z" /><rect x="3" y="9" width="4" height="5" /></Ic></IconCell>
                  <IconCell><Ic s={12}><path d="M3 5h10M5 5l.5 9h5l.5-9M6 5V3h4v2" fill="currentColor" fillOpacity=".35" /></Ic></IconCell>
                </PanelFooter>
              </LayersBody>
            </Panels>
          </DockRow>
        </DockArea>
      </Main>

      <Dialog>
        <TitleBar>
          <TitleText>Color Picker (Foreground Color)</TitleText>
          <CloseBtn><Ic s={8} w={2.600}><path d="M3 3l10 10M13 3L3 13" /></Ic></CloseBtn>
        </TitleBar>
        <Client>
          <PickerCol>
            <SvSquare><SvMark /></SvSquare>
            <WebRow><WebBox />Only Web Colors</WebRow>
          </PickerCol>
          <HueStrip>
            <HueArrow $side="left"><Svg $s={6} viewBox="0 0 6 6" fill="#f0f0f0" stroke="currentColor"><path d="M.5.500l5 2.500-5 2.500z" /></Svg></HueArrow>
            <HueArrow $side="right"><Svg $s={6} viewBox="0 0 6 6" fill="#f0f0f0" stroke="currentColor"><path d="M5.500.500L.5 3l5 2.500z" /></Svg></HueArrow>
            <Pointer viewBox="0 0 10 15"><path d="M.5.500v11.500l2.800-2.600 1.700 4.400 2.200-.9-1.800-4.200h3.800z" fill="#000" stroke="#fff" strokeWidth=".6" /></Pointer>
          </HueStrip>
          <RightSide>
            <RightTop>
              <SwatchCol>
                <SwatchLabel>new</SwatchLabel>
                <Swatch />
                <SwatchLabel>current</SwatchLabel>
                <CubeStack>
                  <Ic s={9}><path {...F} d="M8 1l6 3-6 3-6-3zM2 5.500l5.500 2.800V15L2 12zM14 5.500L8.500 8.300V15l5.500-3z" /></Ic>
                  <MiniSwatch />
                </CubeStack>
              </SwatchCol>
              <ButtonCol>
                <Btn $primary $mb={6}>OK</Btn>
                <Btn $mb={10}>Cancel</Btn>
                <Btn $mb={10}>Add to Swatches</Btn>
                <Btn $mb={0}>Color Libraries</Btn>
              </ButtonCol>
            </RightTop>
            <Fields>
              <FieldCol $w={92}>
                {hsb.map(([l, v, u, on], i) => (
                  <FieldRow key={l} $mb={i === 2 ? 2 : 0}>
                    <Radio $on={on} $ml={1} /><FLabel $w={19} $pl={3}>{l}</FLabel>
                    <Input $w={29}>{v}</Input><Unit>{u}</Unit>
                  </FieldRow>
                ))}
                {rgb.map(([l, v]) => (
                  <FieldRow key={l}>
                    <Radio $ml={1} /><FLabel $w={19} $pl={3}>{l}</FLabel>
                    <Input $w={29}>{l === 'R:' ? <Selected>{v}</Selected> : v}</Input>
                  </FieldRow>
                ))}
                <HexRow>
                  <FLabel $w={10}>#</FLabel>
                  <Input $w={72}>da945c</Input>
                </HexRow>
              </FieldCol>
              <FieldCol $w={68}>
                {lab.map(([l, v], i) => (
                  <FieldRow key={l} $mb={i === 2 ? 2 : 0}>
                    <Radio /><FLabel $w={18} $pl={3}>{l}</FLabel>
                    <Input $w={37}>{v}</Input>
                  </FieldRow>
                ))}
                {cmyk.map(([l, v]) => (
                  <FieldRow key={l}>
                    <FLabel $w={24} $right>{l}</FLabel><Unit $ml={1} />
                    <Input $w={29}>{v}</Input><Unit $ml={5}>%</Unit>
                  </FieldRow>
                ))}
              </FieldCol>
            </Fields>
          </RightSide>
        </Client>
      </Dialog>
    </App_>
  );
}
